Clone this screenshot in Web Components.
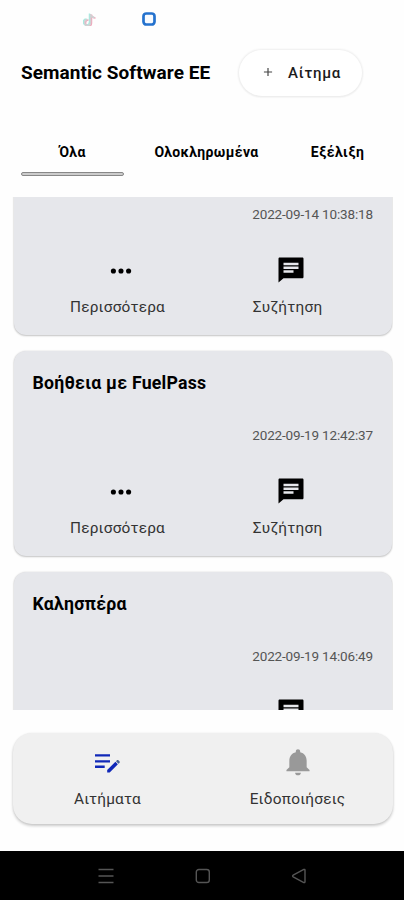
<!DOCTYPE html>
<html lang="el">
<head>
<meta charset="utf-8">
<title>Semantic Software EE</title>
<style>
html,body{margin:0;padding:0;background:#fefefe}
body{font-family:Roboto,"Noto Sans",sans-serif;color:#000}
</style>
</head>
<body>
<request-app></request-app>
<script>
const define = (name, html) => customElements.define(name, class extends HTMLElement {
  constructor() {
    super();
    this.attachShadow({ mode: 'open' }).innerHTML = html;
  }
});

// Material-style 24px glyphs and system navigation glyphs
const ICONS = {
  plus: '<path d="M5 12h14M12 5v14" fill="none" stroke="currentColor" stroke-width="2"/>',
  dots: '<circle cx="3.700" cy="12" r="2.8"/><circle cx="12" cy="12" r="2.8"/><circle cx="20.300" cy="12" r="2.8"/>',
  chat: '<path d="M21 2H3c-.6 0-1 .4-1 1v19l4-3.500h15c.6 0 1-.4 1-1V3c0-.6-.4-1-1-1zM6 9.200h12v2H6v-2zm8 5H6v-2h8v2zm4-6H6v-2h12v2z"/>',
  edit: '<path d="M0 1.2h15v2.4H0zM0 7.2h15v2.4H0zM0 12.6h9.7v2.4H0z"/><path d="M12.200 19.500v-2.500l8.200-8.200 2.500 2.500-8.200 8.200z"/><path fill="#4a6494" d="M21 8.200l1.100-1.100q.5-.4 1 0l1.500 1.500q.5.600 0 1.100l-1.100 1.100z"/>',
  bell: '<path transform="translate(-1 0) scale(1.083 1)" d="M12 22c1.1 0 2-.9 2-2h-4c0 1.1.9 2 2 2zm6-6v-5c0-3.07-1.63-5.64-4.500-6.320V4c0-.83-.67-1.500-1.500-1.500s-1.500.67-1.500 1.500v.68C7.640 5.360 6 7.920 6 11v5l-2 2v1h16v-1l-2-2z"/>',
  menu: '<path d="M.5 1.500h15M.5 8h15M.5 14.500h15" fill="none" stroke="currentColor" stroke-width="1.400"/>',
  home: '<rect x="1.300" y="1.500" width="13" height="13" rx="2.600" fill="none" stroke="currentColor" stroke-width="1.400"/>',
  back: '<path d="M14 2.200v11.600q0 1.200-1.200.7L2.200 8.800Q1 8 2.200 7.200l10.600-5.700q1.200-.5 1.200.7z" fill="none" stroke="currentColor" stroke-width="1.400"/>',
  note: '<g fill="none" stroke-width="1.500"><path d="M7.500 2v8.500a3 3 0 1 1-3-3M7.500 2.500q.8 3 4 3" stroke="#a5ece2" transform="translate(-1 -.5)"/><path d="M7.500 2v8.500a3 3 0 1 1-3-3M7.500 2.500q.8 3 4 3" stroke="#efa9bd" transform="translate(1 .6)"/><path d="M7.500 2v8.500a3 3 0 1 1-3-3M7.500 2.500q.8 3 4 3" stroke="#cfd2d3"/></g>',
  square: '<rect x="1.500" y="1.500" width="11" height="11" rx="2.800" fill="#f8fbff" stroke="#2472ce" stroke-width="2.700"/>'
};
customElements.define('ui-icon', class extends HTMLElement {
  constructor() {
    super();
    this.attachShadow({ mode: 'open' });
  }
  connectedCallback() {
    this.shadowRoot.innerHTML = `<style>:host{display:block;width:24px;height:24px}svg{display:block;width:100%;height:100%}</style>
      <svg viewBox="${this.getAttribute('box') || '0 0 24 24'}" fill="currentColor">${ICONS[this.getAttribute('name')]}</svg>`;
  }
});

define('status-bar', `<style>
:host{display:flex;height:37px;align-items:center;padding-left:83px;box-sizing:border-box}
.n{width:14px;height:14px}.s{width:14px;height:14px;margin-left:45px}
</style><ui-icon class="n" name="note" box="0 0 14 14"></ui-icon><ui-icon class="s" name="square" box="0 0 14 14"></ui-icon>`);

define('app-header', `<style>
:host{display:flex;height:71px;align-items:center;padding-left:21px}
h1{margin:0;font-size:19px;line-height:24px;font-weight:700;width:218px;white-space:nowrap;letter-spacing:.05px}
button{display:flex;align-items:center;justify-content:flex-start;box-sizing:border-box;width:123px;height:46px;padding:0 0 0 22px;border:0;border-radius:23px;background:#fff;box-shadow:0 0 2px 1px #eee,0 1px 2px #e8e8e8;font:500 15px/20px Roboto,"Noto Sans",sans-serif;color:#1c1c1c;letter-spacing:.75px}
ui-icon{width:14px;height:14px;color:#444;margin:-2px 13px 0 0}
</style><h1><slot></slot></h1><button><ui-icon name="plus"></ui-icon><slot name="action"></slot></button>`);

define('tab-bar', `<style>
:host{display:flex;height:89px;padding:0 21px;box-sizing:border-box}
</style><slot></slot>`);

define('tab-item', `<style>
:host{display:flex;flex-direction:column;align-items:center;width:var(--w);margin-right:var(--gap,0);padding-top:34px;font-weight:700;font-size:14px;line-height:20px;white-space:nowrap;letter-spacing:.38px}
i{display:none;box-sizing:border-box;width:103px;height:4px;margin-top:10px;border:1px solid #888;border-radius:2px;background:#ccc}
:host([selected]) i{display:block}
</style><slot></slot><i></i>`);

define('icon-action', `<style>
:host{display:flex;flex-direction:column;align-items:center;font-size:15.400px;line-height:20px;white-space:nowrap;color:#333;letter-spacing:.22px}
.i{height:24px;margin-bottom:15px;display:flex;align-items:center}
</style><div class="i"><slot name="icon"></slot></div><slot></slot>`);

define('request-card', `<style>
:host{display:block;flex:none;box-sizing:border-box;height:205px;padding:20px 18.500px 0 18.500px;margin:0 1.500px 16px 2px;border-radius:12px;background:#e6e7eb;box-shadow:0 1px 2px rgba(0,0,0,.2),0 0 2px rgba(0,0,0,.14)}
h2{margin:0;height:24px;font-size:17.700px;line-height:24px;font-weight:700;letter-spacing:.23px}
time{display:block;margin:30px 0 34px;height:20px;font-size:13.500px;line-height:20px;text-align:right;color:#555;letter-spacing:-.15px}
.a{display:grid;grid-template-columns:170px 170px}
ui-icon{color:#000;margin-left:6px}
.d{width:22px;margin-top:1px}.c{width:30px;height:30px}
:host([peek]) .d{visibility:hidden}
:host([peek]) .l{display:none}
</style><h2><slot></slot></h2><time><slot name="time"></slot></time>
<div class="a"><icon-action><ui-icon slot="icon" class="d" name="dots"></ui-icon><span class="l">Περισσότερα</span></icon-action>
<icon-action><ui-icon slot="icon" class="c" name="chat"></ui-icon><span class="l">Συζήτηση</span></icon-action></div>`);

define('request-list', `<style>
:host{display:flex;flex-direction:column;justify-content:flex-start;height:513px;margin:0 11px 0 12px;overflow:hidden;box-sizing:border-box}
.track{margin-top:-67px}
</style><div class="track"><slot></slot></div>`);

define('bottom-nav', `<style>
:host{display:grid;grid-template-columns:190px 190px;height:91px;margin:23px 11.500px 0 12.500px;padding-top:17px;box-sizing:border-box;border-radius:19px;background:#f0f0f0;box-shadow:0 2px 3px rgba(0,0,0,.2),0 0 2px rgba(0,0,0,.08)}
</style><slot></slot>`);

define('system-bar', `<style>
:host{display:flex;height:49px;background:#000;color:#555;align-items:center;padding-left:98px;box-sizing:border-box}
ui-icon{width:16px;height:16px;margin-right:80.500px}
</style><ui-icon name="menu" box="0 0 16 16"></ui-icon><ui-icon name="home" box="0 0 16 16"></ui-icon><ui-icon name="back" box="0 0 16 16"></ui-icon>`);

define('request-app', `<style>
:host{display:flex;flex-direction:column;width:404px;height:900px;overflow:hidden;background:#fefefe}
.edit{color:#1028b8;width:26px;height:20px;margin-top:1px}
.bell{color:#999;width:32px;height:32px}
system-bar{margin-top:auto}
</style>
<status-bar></status-bar>
<app-header>Semantic Software EE<span slot="action">Αίτημα</span></app-header>
<tab-bar>
<tab-item selected style="--w:103px;--gap:30px">Όλα</tab-item>
<tab-item style="--w:105px;--gap:51px">Ολοκληρωμένα</tab-item>
<tab-item style="--w:55px">Εξέλιξη</tab-item>
</tab-bar>
<request-list>
<request-card><span slot="time">2022-09-14 10:38:18</span></request-card>
<request-card>Βοήθεια με FuelPass<span slot="time">2022-09-19 12:42:37</span></request-card>
<request-card peek>Καλησπέρα<span slot="time">2022-09-19 14:06:49</span></request-card>
</request-list>
<bottom-nav>
<icon-action><ui-icon slot="icon" class="edit" name="edit" box="0 0 26 20"></ui-icon>Αιτήματα</icon-action>
<icon-action><ui-icon slot="icon" class="bell" name="bell"></ui-icon>Ειδοποιήσεις</icon-action>
</bottom-nav>
<system-bar></system-bar>`);
</script>
</body>
</html>
